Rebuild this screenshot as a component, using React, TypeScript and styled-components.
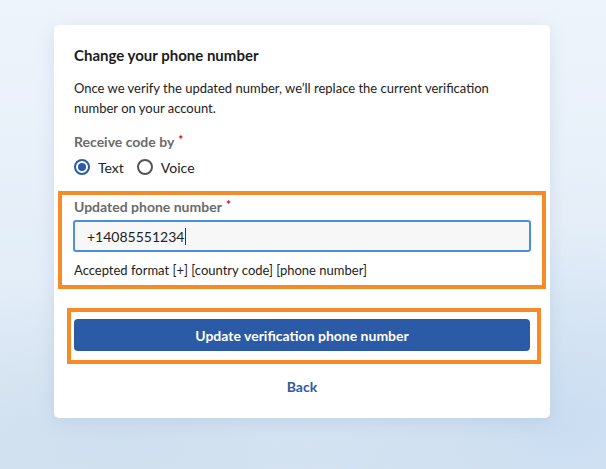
import styled, { createGlobalStyle } from 'styled-components'

const GlobalStyle = createGlobalStyle`
  html, body {
    margin: 0;
    padding: 0;
  }
  body {
    font-family: Lato, "Noto Sans", sans-serif;
    background: #e6eff8;
  }
`

const Page = styled.div`
  width: 606px;
  height: 469px;
  box-sizing: border-box;
  padding-top: 25px;
  padding-left: 54px;
  overflow: hidden;
  background:
    radial-gradient(ellipse 420px 160px at 120px 440px, rgba(205, 222, 238, 0.9), transparent),
    radial-gradient(ellipse 300px 200px at 560px 420px, rgba(200, 220, 240, 0.9), transparent),
    linear-gradient(180deg, #eef4fb 0%, #e3edf8 60%, #dbe7f4 100%);
`

const Card = styled.div`
  width: 496px;
  height: 393px;
  box-sizing: border-box;
  padding: 20px 20px 21px;
  background: #fff;
  border-radius: 5px;
  box-shadow: 0 4px 18px rgba(120, 150, 190, 0.18);
  display: flex;
  flex-direction: column;
`

const Title = styled.h1`
  margin: 0;
  font-size: 15px;
  line-height: 20px;
  font-weight: 700;
  color: #1c1c1c;
`

const Intro = styled.p`
  margin: 13px 0 0;
  font-size: 13px;
  line-height: 20px;
  color: #222;
`

const FieldLabel = styled.div<{ $top?: number }>`
  margin-top: ${(p) => p.$top ?? 0}px;
  font-size: 14px;
  line-height: 20px;
  font-weight: 700;
  color: #6b6b6b;
`

const Required = styled.span`
  color: #d0021b;
  font-size: 12px;
  vertical-align: 3px;
  margin-left: 4px;
  line-height: 1;
`

const RadioRow = styled.div`
  margin-top: 5px;
  display: flex;
  align-items: center;
  gap: 13px;
  height: 20px;
`

const RadioOption = styled.label`
  display: flex;
  align-items: center;
  gap: 8px;
  font-size: 14px;
  color: #222;
`

const RadioCircle = styled.span<{ $checked?: boolean }>`
  width: 16px;
  height: 16px;
  box-sizing: border-box;
  border-radius: 50%;
  border: 2px solid ${(p) => (p.$checked ? '#2b5aa6' : '#555')};
  display: flex;
  align-items: center;
  justify-content: center;
  &::after {
    content: '';
    width: 8px;
    height: 8px;
    border-radius: 50%;
    background: ${(p) => (p.$checked ? '#2b5aa6' : 'transparent')};
  }
`

const Highlight = styled.div<{ $m: string; $p: string; $top: number }>`
  margin: ${(p) => p.$top}px ${(p) => p.$m};
  margin-bottom: 0;
  padding: ${(p) => p.$p};
  border: 4px solid #f68b28;
`

const InputField = styled.div`
  margin: 3px -1px 0;
  height: 32px;
  box-sizing: border-box;
  border: 2px solid #4a8fdc;
  border-radius: 3px;
  background: #f7f7f7;
  padding-left: 12px;
  display: flex;
  align-items: center;
  font-size: 14px;
  color: #222;
`

const Caret = styled.span`
  width: 1px;
  height: 17px;
  background: #1d3b70;
  margin-left: 1px;
`

const Hint = styled.div`
  margin-top: 8px;
  font-size: 13px;
  line-height: 20px;
  color: #222;
`

const PrimaryButton = styled.button`
  width: 100%;
  height: 32px;
  border: none;
  border-radius: 4px;
  background: #2b5aa6;
  color: #fff;
  font-family: Lato, "Noto Sans", sans-serif;
  font-size: 14px;
  font-weight: 700;
  cursor: pointer;
`

const BackLink = styled.a`
  margin-top: 13px;
  align-self: center;
  font-size: 14px;
  line-height: 20px;
  font-weight: 700;
  color: #2b5aa6;
  text-decoration: none;
  cursor: pointer;
`

export default function App() {
  return (
    <>
      <GlobalStyle />
      <Page>
        <Card>
          <Title>Change your phone number</Title>
          <Intro>
            Once we verify the updated number, we’ll replace the current verification
            <br />
            number on your account.
          </Intro>
          <FieldLabel $top={14}>
            Receive code by<Required>*</Required>
          </FieldLabel>
          <RadioRow>
            <RadioOption>
              <RadioCircle $checked />
              Text
            </RadioOption>
            <RadioOption>
              <RadioCircle />
              Voice
            </RadioOption>
          </RadioRow>
          <Highlight $top={14} $m="-16px" $p="2px 12px 5px">
            <FieldLabel>
              Updated phone number<Required>*</Required>
            </FieldLabel>
            <InputField>
              +14085551234
              <Caret />
            </InputField>
            <Hint>Accepted format [+] [country code] [phone number]</Hint>
          </Highlight>
          <Highlight $top={19} $m="-11px 0 -7px" $p="7px 7px 9px 3px">
            <PrimaryButton>Update verification phone number</PrimaryButton>
          </Highlight>
          <BackLink>Back</BackLink>
        </Card>
      </Page>
    </>
  )
}
